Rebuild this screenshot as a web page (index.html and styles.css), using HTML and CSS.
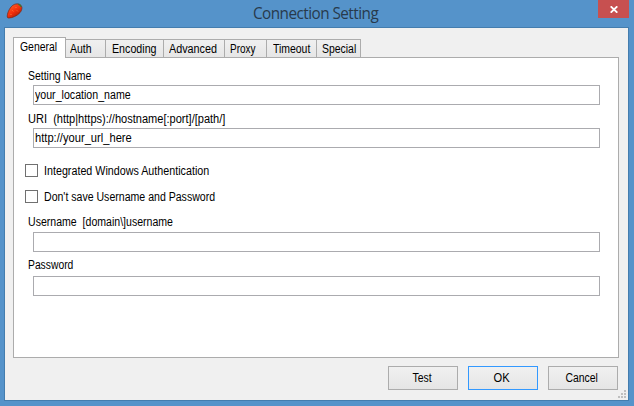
FILE: index.html
```html
<!DOCTYPE html>
<html lang="en">
<head>
<meta charset="utf-8">
<title>Connection Setting</title>
<link rel="stylesheet" href="styles.css">
</head>
<body>
<div class="window">
  <header class="titlebar">
    <svg class="app-icon" width="18" height="18" viewBox="0 0 18 18">
      <defs><linearGradient id="fruit" x1=".2" y1=".1" x2=".8" y2=".9"><stop offset="0" stop-color="#ff5a25"/><stop offset=".5" stop-color="#f5300c"/><stop offset="1" stop-color="#a81c05"/></linearGradient></defs>
      <path d="M1.300 15C1 12 3 6.500 6.500 3.500 9 1.500 13 1.300 14.800 3.200c1.800 1.900 1.200 5-.6 7.200C11.500 13.800 6 16 2.800 16 1.900 16 1.400 15.800 1.300 15z" fill="url(#fruit)" stroke="#7c2a1a" stroke-width=".8"/>
      <path d="M9.500 5l.8.8M6.500 8.500l.8.8M4.500 12l.8.8M11 8.500l.8.8" stroke="#ff8a3c" stroke-width="1"/>
      <path d="M12.300 2.300c1.300.2 2.500 1 2.700 2.700" fill="none" stroke="#3c7a2b" stroke-width="1.200"/>
    </svg>
    <h1 class="title">Connection Setting</h1>
    <div class="close"><svg width="8" height="7" viewBox="0 0 8 7"><path d="M.7.300L7.300 6.700M7.300.300L.7 6.700" stroke="#fff" stroke-width="1.800"/></svg></div>
  </header>
  <main class="client">
    <nav class="tabs">
      <div class="tab active"><span class="t-general">General</span></div>
      <div class="tab auth"><span class="t-auth">Auth</span></div>
      <div class="tab encoding"><span class="t-encoding">Encoding</span></div>
      <div class="tab advanced"><span class="t-advanced">Advanced</span></div>
      <div class="tab proxy"><span class="t-proxy">Proxy</span></div>
      <div class="tab timeout"><span class="t-timeout">Timeout</span></div>
      <div class="tab special"><span class="t-special">Special</span></div>
    </nav>
    <section class="panel">
      <div class="label"><span class="t-setting">Setting Name</span></div>
      <div class="field"><span class="t-location">your_location_name</span></div>
      <div class="label uri"><span class="t-uri">URI  (http|https)://hostname[:port]/[path/]</span></div>
      <div class="field"><span class="t-url">http://your_url_here</span></div>
      <div class="check first"><i class="box"></i><span class="t-integrated">Integrated Windows Authentication</span></div>
      <div class="check"><i class="box"></i><span class="t-save">Don't save Username and Password</span></div>
      <div class="label user"><span class="t-user">Username  [domain\]username</span></div>
      <div class="field"></div>
      <div class="label pass"><span class="t-pass">Password</span></div>
      <div class="field"></div>
    </section>
    <footer class="actions">
      <div class="button"><span class="t-test">Test</span></div>
      <div class="button default"><span class="t-ok">OK</span></div>
      <div class="button"><span class="t-cancel">Cancel</span></div>
    </footer>
    <svg class="grip" width="8" height="8" viewBox="0 0 8 8"><path d="M6 0h2v2H6zM3 3h2v2H3zM6 3h2v2H6zM0 6h2v2H0zM3 6h2v2H3zM6 6h2v2H6z" fill="#bfbfbf"/></svg>
  </main>
</div>
</body>
</html>
```
FILE: styles.css
```css
* { box-sizing: border-box; }
body { margin: 0; font: 12px/14px "Liberation Sans", Arial, sans-serif; color: #000; }
.window { width: 634px; height: 406px; background: #5593ca; padding: 0 5px 5px 4px; overflow: hidden; }
.titlebar { height: 27px; display: flex; justify-content: space-between; align-items: flex-start; }
.app-icon { margin: 2px 0 0 2px; }
.title { margin: 2px 0 0 10px; font: 400 16px/22px "Open Sans", "Noto Sans", sans-serif; color: #283a4c; letter-spacing: -.55px; white-space: nowrap; transform: scaleX(.955); }
.close { width: 31px; height: 18px; background: #c75050; display: flex; align-items: center; justify-content: center; }
.client { position: relative; height: 374px; border: 1px solid #447dae; background: #f0f0f0; padding: 9px 9px 0 8px; }
.tabs { display: flex; align-items: flex-end; height: 20px; }
.tab { height: 19px; margin-bottom: -1px; border: 1px solid #acacac; border-left: 0; background: linear-gradient(#f0f0f0, #e6e6e6); padding: 2px 0 0 6px; white-space: nowrap; }
.tab.active { position: relative; width: 53px; height: 21px; border-left: 1px solid #acacac; border-bottom: 0; background: #fff; }
.tab.auth { width: 40px; padding-left: 4px; }
.encoding { width: 58px; }
.advanced { width: 61px; }
.tab.advanced { padding-left: 5px; }
.proxy { width: 42px; }
.timeout { width: 50px; }
.special { width: 44px; }
.tab.special, .tab.proxy { padding-left: 5px; }
.panel { height: 301px; border: 1px solid #acacac; background: #fff; padding: 11px 18px 0 11px; }
.label { height: 16px; padding-left: 3px; white-space: pre; }
.uri { margin-top: 6px; height: 17px; padding-top: 1px; }
.user { margin-top: 12px; height: 17px; }
.pass { margin-top: 6px; height: 18px; }
.field { height: 20px; margin-left: 8px; border: 1px solid #ababaf; background: #fff; padding: 2px 1px; white-space: nowrap; }
.check { display: flex; align-items: center; height: 13px; gap: 6px; white-space: nowrap; margin-top: 13px; }
.check.first { margin-top: 16px; }
.box { width: 13px; height: 13px; border: 1px solid #707070; background: #fff; }
.actions { display: flex; justify-content: flex-end; gap: 10px; padding: 8px 1px 0 0; }
.button { width: 70px; height: 24px; padding-right: 2px; border: 1px solid #acacac; background: linear-gradient(#f0f0f0, #e5e5e5); display: flex; align-items: center; justify-content: center; }
.default { border-color: #3399ff; }
.grip { position: absolute; right: 2px; bottom: 2px; }

/* Condensed interface lettering */
.panel span, .tab span, .button span { display: inline-block; transform: scaleX(.87); transform-origin: left; }
.button span { transform-origin: center; }
.panel .t-setting { transform: scaleX(.87); }
.panel .t-location { transform: scaleX(.885); }
.panel .t-uri { transform: scaleX(.92); }
.panel .t-url { transform: scaleX(.93); }
.panel .t-integrated { transform: scaleX(.894); }
.panel .t-save { transform: scaleX(.88); }
.panel .t-user { transform: scaleX(.88); }
.panel .t-pass { transform: scaleX(.86); }
.tab .t-encoding { transform: scaleX(.89); }
.tab .t-advanced { transform: scaleX(.9); }
.tab .t-proxy { transform: scaleX(.83); }
.button .t-ok { transform: scaleX(.93); }
```
